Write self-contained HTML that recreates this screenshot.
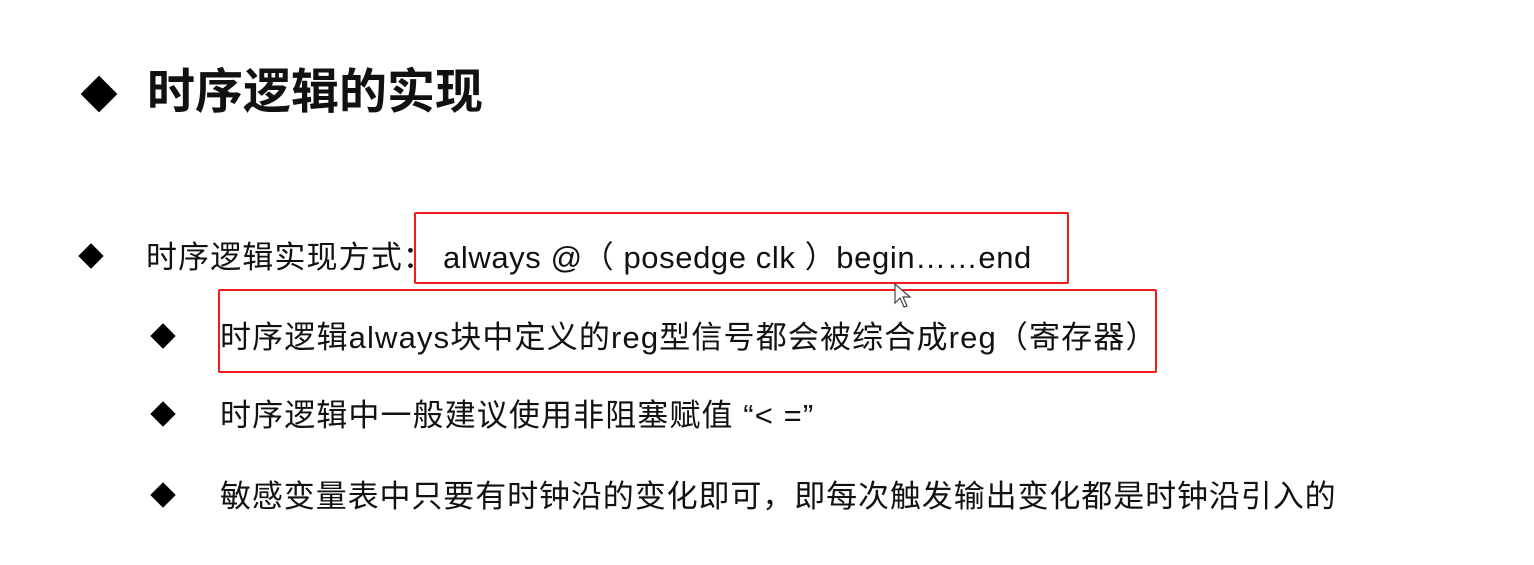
<!DOCTYPE html>
<html><head><meta charset="utf-8"><style>
body{margin:0;width:1534px;height:565px;background:#fff;position:relative;overflow:hidden;font-family:"Liberation Sans","Noto Sans CJK SC",sans-serif;color:#111}
.t{position:absolute;white-space:nowrap;line-height:1;letter-spacing:1px}
.d{position:absolute;background:#000;transform:rotate(45deg)}
.box{position:absolute;border:2.5px solid #f01c1c;border-radius:2px}
</style></head><body>
<div class="d" style="left:86px;top:81px;width:26px;height:26px"></div>
<div class="t" style="left:147px;top:69px;font-size:48px;font-weight:bold;letter-spacing:0">时序逻辑的实现</div>

<div class="d" style="left:82px;top:247px;width:18px;height:18px"></div>
<div class="t" style="left:146px;top:242px;font-size:31px;letter-spacing:1.1px">时序逻辑实现方式：</div>
<div class="t" style="left:443px;top:242px;font-size:31px;letter-spacing:0.6px">always @（ posedge clk ）begin……end</div>
<div class="box" style="left:414px;top:212px;width:651px;height:68px"></div>

<div class="d" style="left:154px;top:327px;width:18px;height:18px"></div>
<div class="t" style="left:220px;top:322px;font-size:31px;letter-spacing:1.15px">时序逻辑always块中定义的reg型信号都会被综合成reg（寄存器）</div>
<div class="box" style="left:218px;top:289px;width:935px;height:80px"></div>

<div class="d" style="left:154px;top:405px;width:18px;height:18px"></div>
<div class="t" style="left:220px;top:400px;font-size:31px;letter-spacing:1.1px">时序逻辑中一般建议使用非阻塞赋值 “&lt; =”</div>

<div class="d" style="left:154px;top:486px;width:18px;height:18px"></div>
<div class="t" style="left:220px;top:481px;font-size:31px;letter-spacing:0.9px">敏感变量表中只要有时钟沿的变化即可，即每次触发输出变化都是时钟沿引入的</div>

<svg style="position:absolute;left:894px;top:283px" width="20" height="28" viewBox="0 0 20 28"><path d="M1 1 L1 20 L6 15 L10 24 L13 23 L9 14 L16 14 Z" fill="#fff" stroke="#444" stroke-width="1.2"/></svg>
</body></html>
